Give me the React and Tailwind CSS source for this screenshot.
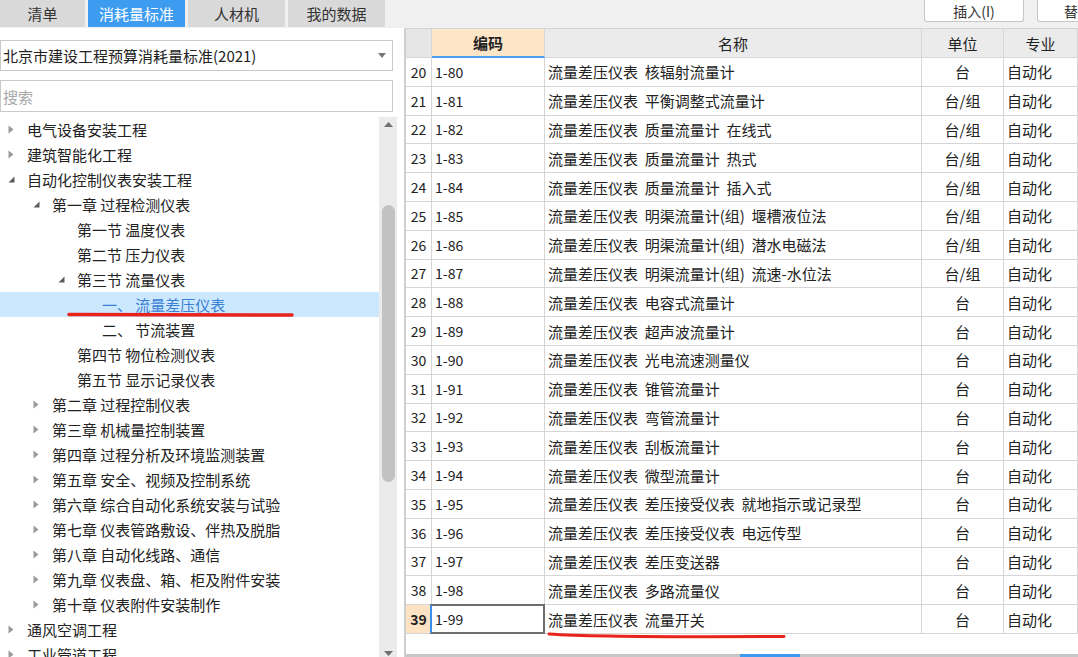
import React from 'react';

const tabs = [
  ['清单', 'w-[85px]', false],
  ['消耗量标准', 'w-[97px]', true],
  ['人材机', 'w-[97px]', false],
  ['我的数据', 'w-[97px]', false],
];

// [level, arrow: 0 none, 1 collapsed, 2 expanded, label, selected]
const tree = [
  [0, 1, '电气设备安装工程'],
  [0, 1, '建筑智能化工程'],
  [0, 2, '自动化控制仪表安装工程'],
  [1, 2, '第一章 过程检测仪表'],
  [2, 0, '第一节 温度仪表'],
  [2, 0, '第二节 压力仪表'],
  [2, 2, '第三节 流量仪表'],
  [3, 0, '一、 流量差压仪表', true],
  [3, 0, '二、 节流装置'],
  [2, 0, '第四节 物位检测仪表'],
  [2, 0, '第五节 显示记录仪表'],
  [1, 1, '第二章 过程控制仪表'],
  [1, 1, '第三章 机械量控制装置'],
  [1, 1, '第四章 过程分析及环境监测装置'],
  [1, 1, '第五章 安全、视频及控制系统'],
  [1, 1, '第六章 综合自动化系统安装与试验'],
  [1, 1, '第七章 仪表管路敷设、伴热及脱脂'],
  [1, 1, '第八章 自动化线路、通信'],
  [1, 1, '第九章 仪表盘、箱、柜及附件安装'],
  [1, 1, '第十章 仪表附件安装制作'],
  [0, 1, '通风空调工程'],
  [0, 1, '工业管道工程'],
];

const indent = ['pl-0', 'pl-[25px]', 'pl-[50px]', 'pl-[75px]'];

const P = '流量差压仪表  ';
const rows = [
  [20, '1-80', P + '核辐射流量计', '台'],
  [21, '1-81', P + '平衡调整式流量计', '台/组'],
  [22, '1-82', P + '质量流量计  在线式', '台/组'],
  [23, '1-83', P + '质量流量计  热式', '台/组'],
  [24, '1-84', P + '质量流量计  插入式', '台/组'],
  [25, '1-85', P + '明渠流量计(组)  堰槽液位法', '台/组'],
  [26, '1-86', P + '明渠流量计(组)  潜水电磁法', '台/组'],
  [27, '1-87', P + '明渠流量计(组)  流速-水位法', '台/组'],
  [28, '1-88', P + '电容式流量计', '台'],
  [29, '1-89', P + '超声波流量计', '台'],
  [30, '1-90', P + '光电流速测量仪', '台'],
  [31, '1-91', P + '锥管流量计', '台'],
  [32, '1-92', P + '弯管流量计', '台'],
  [33, '1-93', P + '刮板流量计', '台'],
  [34, '1-94', P + '微型流量计', '台'],
  [35, '1-95', P + '差压接受仪表  就地指示或记录型', '台'],
  [36, '1-96', P + '差压接受仪表  电远传型', '台'],
  [37, '1-97', P + '差压变送器', '台'],
  [38, '1-98', P + '多路流量仪', '台'],
  [39, '1-99', P + '流量开关', '台'],
];

function Arrow({ kind }) {
  if (kind === 1)
    return (
      <svg width="6" height="9" viewBox="0 0 6 9">
        <path d="M0.5 0.5 L5.5 4.5 L0.5 8.5 Z" fill="#9a9a9a" />
      </svg>
    );
  if (kind === 2)
    return (
      <svg width="7" height="7" viewBox="0 0 7 7">
        <path d="M6.5 0.5 L6.5 6.5 L0.5 6.5 Z" fill="#5a5a5a" />
      </svg>
    );
  return null;
}

const grid = 'grid grid-cols-[26px_113px_377px_82px_1fr]';
const cell = 'border-r border-b border-[#d6d6d6] flex items-center';

export default function App() {
  return (
    <div className="relative w-[1078px] h-[657px] overflow-hidden flex bg-white text-[#222] font-['Noto_Sans_CJK_SC','Liberation_Sans',sans-serif]">
      {/* left panel */}
      <div className="w-[404px] flex flex-col shrink-0">
        <div className="h-[28px] flex gap-[3px] bg-[#f0f0f0] shrink-0">
          {tabs.map(([t, w, active]) => (
            <div
              key={t}
              className={`${w} h-[27px] flex items-center justify-center text-[15px] leading-none ${active ? 'bg-[#3d9cf0] text-white' : 'bg-[#d9d9d9] text-[#333]'}`}
            >
              {t}
            </div>
          ))}
        </div>
        <div className="mt-[12px] w-[393px] h-[31px] border border-[#c9c9c9] flex items-center justify-between pl-[2px] pr-[6px] shrink-0">
          <span className="text-[15px] leading-none text-[#222]">北京市建设工程预算消耗量标准(2021)</span>
          <svg width="8" height="5" viewBox="0 0 8 5">
            <path d="M0 0 L8 0 L4 5 Z" fill="#777" />
          </svg>
        </div>
        <div className="mt-[9px] w-[393px] h-[32px] border border-[#c9c9c9] flex items-center pl-[2px] shrink-0">
          <span className="text-[15px] leading-none text-[#a8a8a8]">搜索</span>
        </div>
        <div className="mt-[5px] flex flex-1 min-h-0">
          <div className="w-[379px] flex flex-col">
            {tree.map(([lvl, arrow, label, sel]) => (
              <div
                key={label}
                className={`h-[25px] shrink-0 flex items-center ${indent[lvl]} ${sel ? 'bg-[#cce8ff]' : ''}`}
              >
                <div className="w-[27px] h-full flex items-center pl-[8px]">
                  <Arrow kind={arrow} />
                </div>
                <span className={`text-[15px] leading-none whitespace-nowrap ${sel ? 'text-[#3b7fd4]' : 'text-[#222]'}`}>{label}</span>
              </div>
            ))}
          </div>
          <div className="w-[18px] bg-[#ebebeb] flex flex-col items-center">
            <svg className="mt-[5px]" width="9" height="5" viewBox="0 0 9 5">
              <path d="M0 5 L9 5 L4.5 0 Z" fill="#707070" />
            </svg>
            <div className="mt-[78px] w-[13px] h-[277px] rounded-full bg-[#c2c2c2]" />
            <div className="flex-1" />
            <svg className="mb-[1px]" width="9" height="5" viewBox="0 0 9 5">
              <path d="M0 0 L9 0 L4.5 5 Z" fill="#707070" />
            </svg>
          </div>
        </div>
      </div>

      {/* right panel */}
      <div className="flex-1 flex flex-col min-w-0">
        <div className="h-[29px] shrink-0 bg-[#f0f0f0] border-b border-[#d4d4d4] flex items-start justify-end gap-[13px]">
          <div className="w-[100px] h-[22px] bg-white border border-t-0 border-[#c6c6c6] rounded-b-[3px] flex items-center justify-center text-[14px] leading-none text-[#333]">
            插入(I)
          </div>
          <div className="w-[41px] h-[22px] bg-white border border-t-0 border-r-0 border-[#c6c6c6] rounded-bl-[3px] flex items-center pl-[26px] text-[14px] leading-none text-[#333] overflow-hidden whitespace-nowrap">
            替换
          </div>
        </div>
        <div className="flex-1 flex flex-col border-l-2 border-[#cfcfcf] min-h-0">
          <div className={`${grid} h-[29px] shrink-0 text-[15px] leading-none`}>
            <div className={`${cell} bg-[#e6e6e6]`} />
            <div className="border-r border-[#d6d6d6] border-b-2 border-b-[#4a9cf0] bg-[#fde5c7] flex items-center justify-center font-bold">编码</div>
            <div className={`${cell} bg-[#ebebeb] justify-center`}>名称</div>
            <div className={`${cell} bg-[#ebebeb] justify-center`}>单位</div>
            <div className={`${cell} bg-[#ebebeb] justify-center`}>专业</div>
          </div>
          {rows.map(([n, code, name, unit]) => {
            const last = n === 39;
            return (
              <div key={n} className={`${grid} h-[28.8px] shrink-0 text-[15px] leading-none`}>
                <div className={`${cell} justify-center text-[14px] ${last ? 'bg-[#fde3c3] font-bold' : ''}`}>{n}</div>
                <div className={`${cell} relative pl-[3px] text-[14px]`}>
                  {code}
                  {last && (
                    <div className="absolute -top-px -left-[2px] -right-px -bottom-px border-2 border-[#6e6e6e] border-l-[#3b8fe8]" />
                  )}
                </div>
                <div className={`${cell} pl-[3px] whitespace-pre`}>{name}</div>
                <div className={`${cell} justify-center`}>{unit}</div>
                <div className={`${cell} pl-[3px]`}>自动化</div>
              </div>
            );
          })}
          <div className="flex-1" />
          <div className="h-[3px] shrink-0 bg-[#c8c8c8] flex">
            <div className="ml-[334px] w-[60px] bg-[#3d9cf0]" />
          </div>
        </div>
      </div>

      {/* red annotation strokes */}
      <svg className="absolute inset-0 pointer-events-none" width="1078" height="657">
        <path d="M69 314.5 L292 315" stroke="#e8231b" strokeWidth="3.5" strokeLinecap="round" fill="none" />
        <path d="M549 634 Q 600 637.5 784 636.5" stroke="#e8231b" strokeWidth="3" strokeLinecap="round" fill="none" />
      </svg>
    </div>
  );
}
